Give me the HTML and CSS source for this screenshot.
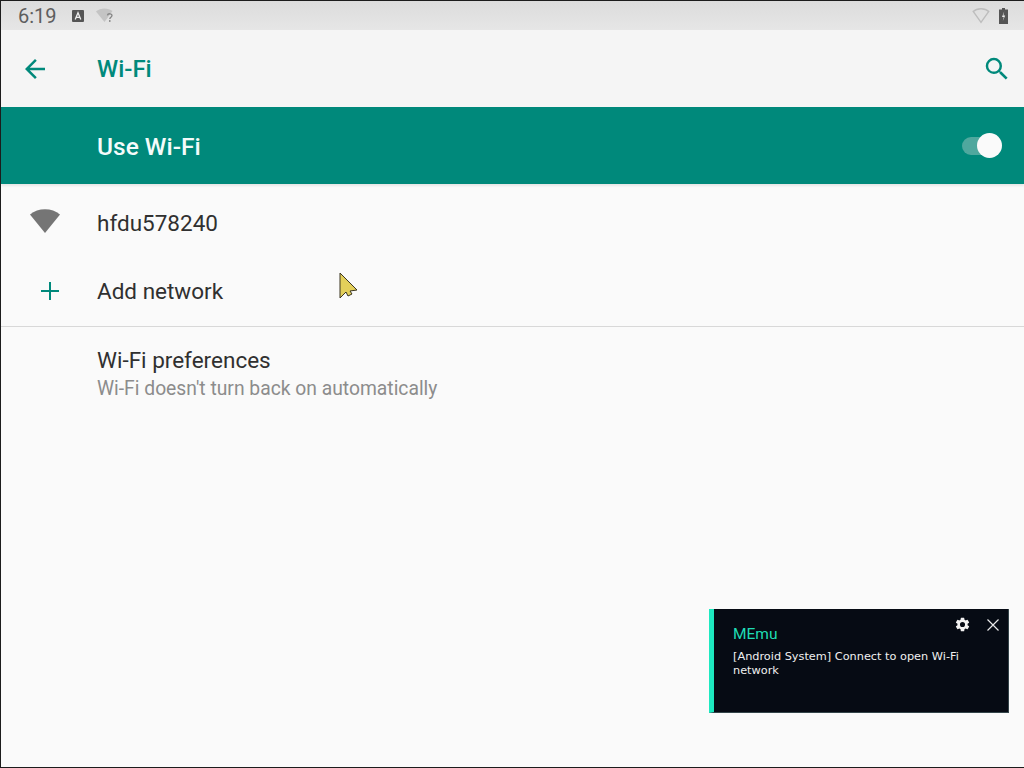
FILE: index.html
```html
<!DOCTYPE html>
<html lang="en">
<head>
  <meta charset="UTF-8">
  <title>Wi-Fi</title>
  <link rel="stylesheet" href="styles.css">
</head>

<body>
  <div class="screen">
    <div class="statusBar">
      <span class="clock">6:19</span>
      <svg class="statusIcon" width="12" height="12" viewBox="0 0 12 12">
        <rect width="12" height="12" rx="1" fill="#555"/>
        <path d="M3.2 9.5 6 2.8 8.8 9.5M4.3 7.3h3.4" fill="none" stroke="#eee" stroke-width="1.3"/>
      </svg>
      <svg class="statusIcon" width="18" height="15" viewBox="0 0 18 15">
        <path d="M0 3.500C4-.3 12-.6 16.500 3L8.500 14z" fill="#c4c4c4"/>
        <path d="M11.400 7.400c.4-2.300 4.600-2.100 4.600.2 0 1.600-2.200 1.700-2.200 3.400M13.800 12v2" fill="none" stroke="#858585" stroke-width="1.300"/>
      </svg>
      <span class="spacer"></span>
      <svg width="18" height="16" viewBox="0 0 18 16">
        <path d="M1.200 3.400C5-.2 13-.2 16.800 3.400L9 14.400z" fill="none" stroke="#bdbdbd" stroke-width="1.400"/>
      </svg>
      <svg class="battery" width="9" height="16" viewBox="0 0 9 16">
        <path d="M3 0h3v1.500h3V16H0V1.500h3z" fill="#555"/>
        <path d="M5.200 3.500 3 9h1.800l-1 4 2.400-5.500H4.400z" fill="#eee"/>
      </svg>
    </div>

    <div class="appBar">
      <svg class="backIcon" width="30" height="30" viewBox="0 0 24 24">
        <path d="M20 11H7.830l5.590-5.590L12 4l-8 8 8 8 1.410-1.410L7.830 13H20z" fill="#00897b"/>
      </svg>
      <h1 class="appTitle">Wi-Fi</h1>
      <svg width="30" height="30" viewBox="0 0 24 24">
        <path d="M15.500 14h-.79l-.28-.27A6.470 6.470 0 0 0 16 9.500 6.500 6.500 0 1 0 9.500 16c1.610 0 3.090-.59 4.230-1.570l.27.28v.79l5 4.990L20.490 19l-4.990-5zm-6 0C7.010 14 5 11.990 5 9.500S7.010 5 9.500 5 14 7.010 14 9.500 11.990 14 9.500 14z" fill="#00897b"/>
      </svg>
    </div>

    <div class="masterSwitch">
      <span class="masterLabel">Use Wi-Fi</span>
      <div class="toggle">
        <div class="toggleThumb"></div>
      </div>
    </div>

    <div class="row networkRow">
      <svg class="networkIcon" width="32" height="26" viewBox="0 0 32 26">
        <path d="M1 6.500C9-.5 23-.5 31 6.500L16 25z" fill="#757575"/>
      </svg>
      <span class="rowText">hfdu578240</span>
    </div>
    <div class="row addRow">
      <svg class="plusIcon" width="18" height="18" viewBox="0 0 18 18">
        <path d="M9 0v18M0 9h18" stroke="#00897b" stroke-width="2"/>
      </svg>
      <span class="rowText">Add network</span>
    </div>

    <div class="prefs">
      <div class="rowText">Wi-Fi preferences</div>
      <div class="prefsSub">Wi-Fi doesn't turn back on automatically</div>
    </div>

    <svg class="cursor" width="20" height="28" viewBox="0 0 20 28">
      <path d="M1 1v25l6-6 2 4 4-2-2-3 7-1z" fill="#e3cf5a" stroke="#3a3520" stroke-width="1"/>
    </svg>

    <div class="toast">
      <div class="toastTitle">MEmu</div>
      <div class="toastText">[Android System] Connect to open Wi-Fi network</div>
      <div class="toastActions">
        <svg width="17" height="17" viewBox="0 0 24 24">
          <path d="M19.140 12.940a7.100 7.100 0 0 0 0-1.880l2.030-1.580a.5.500 0 0 0 .12-.61l-1.920-3.320a.5.500 0 0 0-.59-.22l-2.390.96a7 7 0 0 0-1.620-.94l-.36-2.540a.5.500 0 0 0-.48-.41h-3.840a.5.500 0 0 0-.47.41l-.36 2.540a7.300 7.300 0 0 0-1.620.94l-2.390-.96a.5.500 0 0 0-.59.22L2.740 8.870a.5.500 0 0 0 .12.61l2.030 1.580a7.100 7.100 0 0 0 0 1.880l-2.030 1.580a.5.500 0 0 0-.12.61l1.920 3.320c.12.22.37.29.59.22l2.390-.96c.5.380 1.030.7 1.620.94l.36 2.540c.05.24.24.41.48.41h3.840c.24 0 .44-.17.47-.41l.36-2.540a6.900 6.900 0 0 0 1.620-.94l2.390.96c.22.08.47 0 .59-.22l1.920-3.320a.5.500 0 0 0-.12-.61zM12 15.600a3.600 3.600 0 1 1 0-7.200 3.600 3.600 0 0 1 0 7.200z" fill="#f2f2f2"/>
        </svg>
        <svg width="14" height="14" viewBox="0 0 14 14">
          <path d="M1.500 1.500l11 11M12.500 1.500l-11 11" stroke="#e8e8e8" stroke-width="1.200"/>
        </svg>
      </div>
    </div>
  </div>
</body>
</html>
```

FILE: styles.css
```css
html, body {
  margin: 0;
  padding: 0;
}

body {
  font-family: Roboto, "Liberation Sans", sans-serif;
  background-color: #fafafa;
}

.screen {
  position: relative;
  width: 1024px;
  height: 768px;
  box-sizing: border-box;
  border: 1px solid #1c1c1c;
  border-width: 1px 0 1px 1px;
  background-color: #fafafa;
  overflow: hidden;
}

.statusBar {
  display: flex;
  align-items: center;
  height: 29px;
  padding: 0 16px 0 17px;
  background: linear-gradient(#dcdcdc, #e6e6e6);
}

.clock {
  font-size: 20px;
  color: #5e5e5e;
  margin-right: 15px;
}

.statusIcon {
  margin-right: 12px;
}

.spacer {
  flex: 1;
}

.battery {
  margin-left: 9px;
}

.appBar {
  display: flex;
  align-items: center;
  height: 77px;
  padding: 0 12px 0 19px;
  background-color: #f5f5f5;
}

.appTitle {
  flex: 1;
  margin: 0 0 0 47px;
  font-size: 24px;
  font-weight: 500;
  color: #00897b;
}

.masterSwitch {
  display: flex;
  align-items: center;
  justify-content: space-between;
  height: 77px;
  padding: 0 24px 0 96px;
  background-color: #00897b;
  box-shadow: 0 2px 2px rgba(0, 0, 0, 0.08);
}

.masterLabel {
  margin-top: 2px;
  font-size: 24.500px;
  font-weight: 500;
  color: #f4fbfa;
}

.toggle {
  position: relative;
  width: 38px;
  height: 18px;
  border-radius: 9px;
  background-color: #4fa89e;
}

.toggleThumb {
  position: absolute;
  top: -4px;
  right: -2px;
  width: 25px;
  height: 25px;
  border-radius: 50%;
  background-color: #fafafa;
}

.row {
  display: flex;
  align-items: center;
  padding-left: 28px;
}

.networkRow {
  height: 72px;
  padding-top: 5px;
  box-sizing: border-box;
}

.networkIcon {
  margin: -3px 36px 0 0;
}

.plusIcon {
  margin: 0 38px 0 12px;
}

.addRow {
  height: 70px;
  border-bottom: 1px solid #d8d8d8;
}

.rowText {
  font-size: 22.500px;
  color: #303030;
}

.prefs {
  padding: 20px 0 0 96px;
}

.prefsSub {
  margin-top: 4px;
  font-size: 19.300px;
  color: #8c8c8c;
}

.cursor {
  position: absolute;
  left: 338px;
  top: 271px;
}

.toast {
  position: absolute;
  left: 708px;
  top: 608px;
  width: 300px;
  height: 104px;
  box-sizing: border-box;
  padding: 16px 0 0 19px;
  border: 1px solid #34454a;
  border-width: 0 1px 1px 0;
  border-left: 5px solid #1de9c0;
  background-color: #060b14;
}

.toastTitle {
  font-size: 15.500px;
  color: #1fdcb4;
}

.toastText {
  width: 235px;
  margin-top: 7px;
  font-family: "DejaVu Sans", sans-serif;
  font-size: 11.300px;
  line-height: 14px;
  color: #f0f0f0;
}

.toastActions {
  position: absolute;
  top: 7px;
  right: 8px;
  display: flex;
  gap: 15px;
  align-items: center;
}
```
